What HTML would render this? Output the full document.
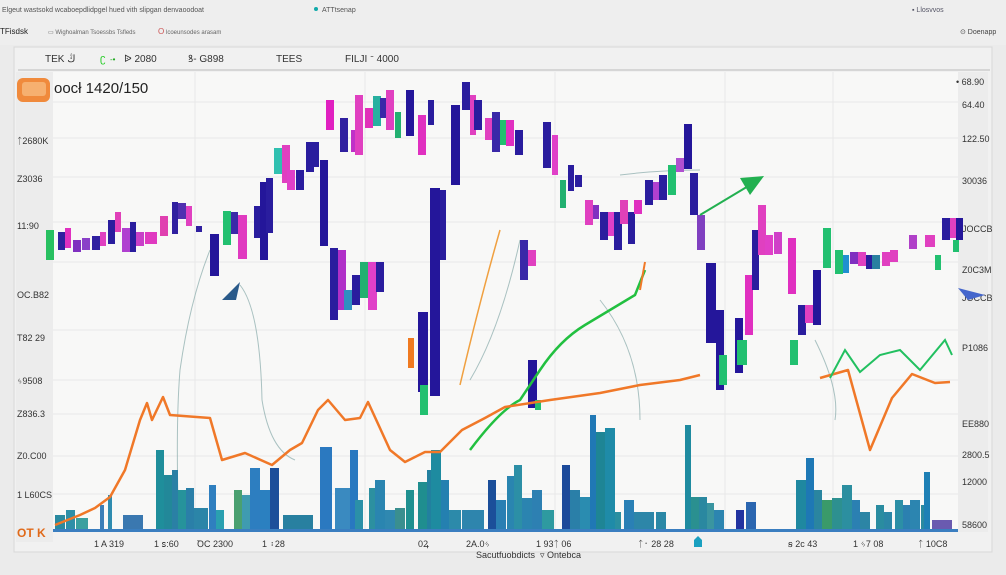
<!DOCTYPE html>
<html><head><meta charset="utf-8"><style>
html,body{margin:0;padding:0;width:1006px;height:575px;overflow:hidden;background:#ececec;font-family:"Liberation Sans",sans-serif}
</style></head><body>
<svg width="1006" height="575" viewBox="0 0 1006 575" xmlns="http://www.w3.org/2000/svg" font-family="Liberation Sans, sans-serif">
<rect width="1006" height="575" fill="#ebebeb"/>
<rect x="0" y="0" width="1006" height="45" fill="#eeeeee"/>
<text x="2" y="12" font-size="7" fill="#555">Elgeut wastsokd wcaboepdlidpgel hued vith slipgan denvaoodoat</text>
<circle cx="316" cy="9" r="2" fill="#1aa"/><text x="322" y="12" font-size="7" fill="#555">ATTtsenap</text>
<text x="912" y="12" font-size="7" fill="#556">▪ Llosvvos</text>
<text x="0" y="34" font-size="8" fill="#222">TFisdsk</text>
<text x="48" y="34" font-size="6" fill="#666">▭ Wighoalman   Tsoessbs Tsfleds</text>
<text x="158" y="34" font-size="8" fill="#c55">O</text><text x="166" y="34" font-size="6" fill="#666">lcoeunsodes  arasam</text>
<text x="960" y="34" font-size="7" fill="#444">⊙ Doenapp</text>
<!-- panel -->
<rect x="14" y="47" width="978" height="505" fill="#f1f1f1" stroke="#d8d8d8"/>
<line x1="18" y1="70" x2="990" y2="70" stroke="#bbb"/>
<text x="45" y="62" font-size="10" fill="#333">TEK ڭ</text>
<text x="100" y="62" font-size="11" fill="#2c2">ʗ</text><text x="110" y="62" font-size="8" fill="#2a2">-•</text>
<text x="124" y="62" font-size="10" fill="#333">ᐉ 2080</text>
<text x="188" y="62" font-size="10" fill="#333">ꝸ-  G898</text>
<text x="276" y="62" font-size="10" fill="#333">TEES</text>
<text x="345" y="62" font-size="10" fill="#333">FILJI ᐨ 4000</text>
<!-- axes columns -->
<rect x="16" y="72" width="37" height="470" fill="#ececec"/>
<rect x="958" y="72" width="30" height="460" fill="#ececec"/>
<rect x="53" y="72" width="905" height="458" fill="#f8f8f7"/>
<g stroke="#e8e8e8" stroke-width="1">
<line x1="53" y1="102" x2="958" y2="102"/><line x1="53" y1="138" x2="958" y2="138"/><line x1="53" y1="177" x2="958" y2="177"/><line x1="53" y1="222" x2="958" y2="222"/><line x1="53" y1="262" x2="958" y2="262"/><line x1="53" y1="330" x2="958" y2="330"/><line x1="53" y1="380" x2="958" y2="380"/><line x1="53" y1="414" x2="958" y2="414"/><line x1="53" y1="456" x2="958" y2="456"/><line x1="53" y1="494" x2="958" y2="494"/>
<line x1="195" y1="72" x2="195" y2="530"/><line x1="365" y1="72" x2="365" y2="530"/><line x1="555" y1="72" x2="555" y2="530"/><line x1="725" y1="72" x2="725" y2="530"/><line x1="833" y1="72" x2="833" y2="530"/>
</g>
<!-- logo -->
<rect x="17" y="78" width="33" height="24" rx="6" fill="#f08a3c"/><rect x="22" y="82" width="24" height="14" rx="3" fill="#f6b070"/>
<text x="54" y="93" font-size="15" fill="#222">oocł 1420/150</text>
<!-- left axis labels -->
<g font-size="9" fill="#333">
<text x="17" y="144">ᛏ2680K</text><text x="17" y="182">Z3036</text><text x="17" y="229">11:90</text><text x="17" y="298">OC.B82</text><text x="17" y="341">T82 29</text><text x="17" y="384">ᛃ9508</text><text x="17" y="417">Z836.3</text><text x="17" y="459">Z0.C00</text><text x="17" y="498">1 L60CS</text>
</g>
<text x="17" y="537" font-size="12" font-weight="bold" fill="#e06a1a">OT K</text>
<!-- right axis labels -->
<g font-size="9" fill="#333">
<text x="956" y="85">• 68.90</text><text x="962" y="108">64.40</text><text x="962" y="142">122.50</text><text x="962" y="184">30036</text><text x="962" y="232">JOCCB</text><text x="962" y="273">Z0C3M</text><text x="962" y="301">JOCCB</text><text x="962" y="351">P1086</text><text x="962" y="427">EE880</text><text x="962" y="458">2800.5</text><text x="962" y="485">12000</text><text x="962" y="528">58600</text>
</g>
<path d="M958 288 L985 295 L968 300 Z" fill="#4466cc"/>
<!-- thin lines -->
<g fill="none" stroke="#8aa" stroke-width="1" opacity=".7">
<path d="M210 250 Q190 300 180 370 Q176 420 178 500"/><path d="M240 285 Q260 310 262 400 Q270 450 295 460"/><path d="M600 300 Q640 350 640 420"/><path d="M815 340 Q840 390 835 420"/><path d="M620 175 Q660 170 700 170"/><path d="M520 240 Q500 330 470 380"/>
</g>
<!-- volume bars -->
<g>
<rect x="55" y="515" width="10" height="15" fill="#2a8aa0"/><rect x="66" y="510" width="9" height="20" fill="#2e8fa8"/><rect x="76" y="518" width="12" height="12" fill="#3aa0a0"/><rect x="100" y="505" width="4" height="25" fill="#3b7fb8"/><rect x="108" y="495" width="4" height="35" fill="#2f8cb0"/><rect x="123" y="515" width="20" height="15" fill="#3a78b0"/>
<rect x="156" y="450" width="8" height="80" fill="#1f8e9b"/><rect x="164" y="475" width="8" height="55" fill="#228899"/><rect x="172" y="470" width="6" height="60" fill="#2a80a5"/><rect x="178" y="490" width="8" height="40" fill="#26939b"/><rect x="186" y="488" width="8" height="42" fill="#2a7fa8"/><rect x="194" y="508" width="14" height="22" fill="#2b85a8"/><rect x="209" y="485" width="7" height="45" fill="#2f7fbf"/><rect x="216" y="510" width="8" height="20" fill="#2aa0b0"/><rect x="234" y="490" width="8" height="40" fill="#4aa070"/><rect x="242" y="495" width="10" height="35" fill="#3f9bb0"/><rect x="250" y="468" width="10" height="62" fill="#2d7ec0"/><rect x="260" y="490" width="10" height="40" fill="#2b80c0"/><rect x="270" y="468" width="9" height="62" fill="#1d4f9a"/>
<rect x="283" y="515" width="30" height="15" fill="#2880a0"/><rect x="320" y="447" width="12" height="83" fill="#2b79c0"/><rect x="335" y="488" width="16" height="42" fill="#3a8ac0"/><rect x="350" y="450" width="8" height="80" fill="#2878c0"/><rect x="355" y="500" width="8" height="30" fill="#2b90a8"/><rect x="369" y="488" width="6" height="42" fill="#2c90a0"/><rect x="375" y="480" width="10" height="50" fill="#2a85b0"/><rect x="385" y="510" width="10" height="20" fill="#2f88b0"/><rect x="395" y="508" width="10" height="22" fill="#3a8f8f"/><rect x="406" y="490" width="8" height="40" fill="#1f9090"/>
<rect x="418" y="482" width="9" height="48" fill="#1f8e8f"/><rect x="427" y="470" width="8" height="60" fill="#22809f"/><rect x="431" y="450" width="10" height="80" fill="#1e8ba0"/><rect x="441" y="480" width="8" height="50" fill="#2480b0"/><rect x="449" y="510" width="12" height="20" fill="#2c8aaa"/><rect x="462" y="510" width="22" height="20" fill="#2e85ad"/><rect x="488" y="480" width="8" height="50" fill="#1b4f9a"/><rect x="496" y="500" width="10" height="30" fill="#2a7fb3"/><rect x="507" y="476" width="7" height="54" fill="#2a85b0"/><rect x="514" y="465" width="8" height="65" fill="#2c8fa6"/><rect x="522" y="498" width="10" height="32" fill="#2b84b0"/><rect x="532" y="490" width="10" height="40" fill="#2d80b2"/><rect x="542" y="510" width="12" height="20" fill="#2e9aa0"/>
<rect x="562" y="465" width="8" height="65" fill="#1d4a9a"/><rect x="570" y="490" width="10" height="40" fill="#2a7fa8"/><rect x="580" y="497" width="10" height="33" fill="#2a8cb0"/><rect x="590" y="415" width="6" height="115" fill="#2078b5"/><rect x="596" y="432" width="10" height="98" fill="#1e8595"/><rect x="605" y="428" width="10" height="102" fill="#1f8ba8"/><rect x="615" y="512" width="6" height="18" fill="#2a8fa0"/><rect x="624" y="500" width="10" height="30" fill="#2a80b5"/><rect x="634" y="512" width="20" height="18" fill="#2d86a8"/><rect x="656" y="512" width="10" height="18" fill="#2b88a6"/>
<rect x="685" y="425" width="6" height="105" fill="#1f8ba0"/><rect x="691" y="497" width="8" height="33" fill="#2a9090"/><rect x="699" y="497" width="8" height="33" fill="#2a88a0"/><rect x="707" y="503" width="7" height="27" fill="#3a95a0"/><rect x="714" y="510" width="10" height="20" fill="#2c85b0"/><rect x="736" y="510" width="8" height="20" fill="#2233a0"/><rect x="746" y="502" width="10" height="28" fill="#2b66b0"/>
<rect x="796" y="480" width="10" height="50" fill="#1f88a0"/><rect x="806" y="458" width="8" height="72" fill="#1e78b5"/><rect x="814" y="490" width="8" height="40" fill="#2a85a0"/><rect x="822" y="500" width="10" height="30" fill="#3a9a6a"/><rect x="832" y="498" width="10" height="32" fill="#2d9090"/><rect x="842" y="485" width="10" height="45" fill="#2c8fa0"/><rect x="852" y="500" width="8" height="30" fill="#2b80b2"/><rect x="860" y="512" width="10" height="18" fill="#2c85a5"/><rect x="876" y="505" width="8" height="25" fill="#2a8ca0"/><rect x="884" y="512" width="8" height="18" fill="#2b86a6"/><rect x="895" y="500" width="8" height="30" fill="#2c8fa6"/><rect x="903" y="505" width="8" height="25" fill="#2b80b0"/><rect x="910" y="500" width="10" height="30" fill="#2c85b0"/><rect x="921" y="505" width="6" height="25" fill="#2a8aa0"/><rect x="924" y="472" width="6" height="58" fill="#1e80b5"/><rect x="932" y="520" width="20" height="10" fill="#6a5ab0"/>
</g>
<!-- candles -->
<g>
<rect x="46" y="230" width="8" height="30" fill="#28c060"/>
<rect x="58" y="232" width="7" height="18" fill="#3020a0"/><rect x="65" y="228" width="6" height="20" fill="#e030c0"/><rect x="73" y="240" width="8" height="12" fill="#8030c0"/><rect x="82" y="238" width="8" height="12" fill="#8a40c8"/><rect x="92" y="236" width="8" height="14" fill="#3020a0"/><rect x="100" y="232" width="6" height="14" fill="#e040c0"/><rect x="108" y="220" width="7" height="24" fill="#2a1d9e"/><rect x="115" y="212" width="6" height="20" fill="#e040b8"/><rect x="122" y="228" width="8" height="24" fill="#b040d0"/><rect x="130" y="222" width="6" height="30" fill="#2a1d9e"/><rect x="136" y="232" width="8" height="14" fill="#c840c8"/><rect x="145" y="232" width="12" height="12" fill="#e03ac0"/><rect x="160" y="216" width="8" height="20" fill="#e040b0"/><rect x="172" y="202" width="6" height="32" fill="#3020a0"/><rect x="178" y="203" width="8" height="16" fill="#5030b0"/><rect x="186" y="206" width="6" height="20" fill="#e040c0"/><rect x="196" y="226" width="6" height="6" fill="#3020a0"/><rect x="210" y="234" width="9" height="42" fill="#24169a"/>
<rect x="223" y="211" width="8" height="34" fill="#22c070"/><rect x="231" y="212" width="7" height="22" fill="#3a2aa8"/><rect x="238" y="215" width="9" height="44" fill="#e03ac0"/><rect x="254" y="206" width="6" height="32" fill="#2a1d9e"/><rect x="260" y="182" width="8" height="78" fill="#24169a"/><rect x="266" y="178" width="7" height="55" fill="#2a1d9e"/><rect x="274" y="148" width="8" height="26" fill="#30c0b0"/><rect x="282" y="145" width="8" height="38" fill="#e040c0"/><rect x="287" y="170" width="8" height="20" fill="#e040c8"/><rect x="296" y="170" width="8" height="20" fill="#2a1d9e"/><rect x="306" y="142" width="8" height="30" fill="#2a1d9e"/><rect x="313" y="142" width="6" height="25" fill="#2a1d9e"/><rect x="320" y="160" width="8" height="86" fill="#24169a"/>
<rect x="326" y="100" width="8" height="30" fill="#e020c0"/><rect x="340" y="118" width="8" height="34" fill="#3020a0"/><rect x="351" y="130" width="8" height="22" fill="#c030c8"/><rect x="355" y="95" width="8" height="60" fill="#e040c0"/><rect x="365" y="108" width="8" height="20" fill="#e030b8"/><rect x="373" y="96" width="8" height="30" fill="#28b0a0"/><rect x="380" y="98" width="8" height="20" fill="#3a28a8"/><rect x="386" y="90" width="8" height="40" fill="#e040c0"/><rect x="395" y="112" width="6" height="26" fill="#22b070"/><rect x="406" y="90" width="8" height="46" fill="#24169a"/><rect x="418" y="115" width="8" height="40" fill="#e030c0"/><rect x="428" y="100" width="6" height="25" fill="#2a1d9e"/>
<rect x="330" y="248" width="8" height="72" fill="#2a1d9e"/><rect x="338" y="250" width="8" height="60" fill="#b030c8"/><rect x="344" y="290" width="8" height="20" fill="#3090c0"/><rect x="352" y="275" width="8" height="30" fill="#2a1d9e"/><rect x="360" y="262" width="8" height="36" fill="#22b070"/><rect x="368" y="262" width="9" height="48" fill="#e040c8"/><rect x="376" y="262" width="8" height="30" fill="#2a1d9e"/>
<rect x="408" y="338" width="6" height="30" fill="#f07a20"/><rect x="418" y="312" width="10" height="80" fill="#24169a"/><rect x="420" y="385" width="8" height="30" fill="#22c070"/><rect x="430" y="188" width="10" height="208" fill="#24169a"/><rect x="440" y="190" width="6" height="70" fill="#2a1d9e"/><rect x="451" y="105" width="9" height="80" fill="#24169a"/><rect x="462" y="82" width="8" height="28" fill="#2a1d9e"/><rect x="470" y="95" width="6" height="40" fill="#e040c0"/><rect x="474" y="100" width="8" height="30" fill="#2a1d9e"/><rect x="485" y="118" width="8" height="22" fill="#e040c0"/><rect x="492" y="112" width="8" height="40" fill="#3a28a8"/><rect x="500" y="120" width="8" height="25" fill="#22c070"/><rect x="506" y="120" width="8" height="26" fill="#e030c0"/><rect x="515" y="130" width="8" height="25" fill="#2a1d9e"/><rect x="520" y="240" width="8" height="40" fill="#3a28a8"/><rect x="528" y="250" width="8" height="16" fill="#e040c0"/>
<rect x="528" y="360" width="9" height="48" fill="#24169a"/><rect x="535" y="400" width="6" height="10" fill="#22c070"/>
<rect x="543" y="122" width="8" height="46" fill="#2a1d9e"/><rect x="552" y="135" width="6" height="40" fill="#e040c8"/><rect x="560" y="180" width="6" height="28" fill="#22b070"/><rect x="568" y="165" width="6" height="26" fill="#2a1d9e"/><rect x="575" y="175" width="7" height="12" fill="#2a1d9e"/><rect x="585" y="200" width="8" height="25" fill="#e040c0"/><rect x="593" y="205" width="6" height="14" fill="#8030c0"/><rect x="600" y="212" width="8" height="28" fill="#2a1d9e"/><rect x="608" y="212" width="6" height="24" fill="#e040c8"/><rect x="614" y="212" width="8" height="38" fill="#2a1d9e"/><rect x="620" y="200" width="8" height="24" fill="#e040b8"/><rect x="628" y="212" width="7" height="32" fill="#2a1d9e"/><rect x="634" y="200" width="8" height="14" fill="#e030c0"/><rect x="645" y="180" width="8" height="25" fill="#2a1d9e"/><rect x="653" y="182" width="6" height="18" fill="#b040d0"/><rect x="659" y="175" width="8" height="25" fill="#2a1d9e"/><rect x="668" y="165" width="8" height="30" fill="#22c070"/><rect x="676" y="158" width="8" height="14" fill="#b050d0"/><rect x="684" y="124" width="8" height="45" fill="#24169a"/><rect x="690" y="173" width="8" height="42" fill="#2a1d9e"/><rect x="697" y="215" width="8" height="35" fill="#8040c0"/>
<rect x="706" y="263" width="10" height="80" fill="#24169a"/><rect x="716" y="310" width="8" height="80" fill="#24169a"/><rect x="719" y="355" width="8" height="30" fill="#22c070"/><rect x="735" y="318" width="8" height="55" fill="#24169a"/><rect x="737" y="340" width="10" height="25" fill="#22c070"/><rect x="745" y="275" width="8" height="60" fill="#e030c0"/><rect x="752" y="230" width="7" height="60" fill="#2a1d9e"/><rect x="758" y="205" width="8" height="50" fill="#e040c0"/><rect x="765" y="235" width="8" height="20" fill="#e040c8"/><rect x="774" y="232" width="8" height="22" fill="#d040c8"/><rect x="788" y="238" width="8" height="56" fill="#e030c0"/><rect x="798" y="305" width="8" height="30" fill="#2a1d9e"/><rect x="805" y="305" width="8" height="18" fill="#e040c0"/><rect x="813" y="270" width="8" height="55" fill="#24169a"/><rect x="790" y="340" width="8" height="25" fill="#22c070"/><rect x="823" y="228" width="8" height="40" fill="#22c070"/><rect x="835" y="250" width="8" height="24" fill="#22c070"/><rect x="843" y="255" width="6" height="18" fill="#2090d0"/><rect x="850" y="252" width="8" height="12" fill="#8030c0"/><rect x="858" y="252" width="8" height="14" fill="#e040c0"/><rect x="866" y="255" width="6" height="14" fill="#2a1d9e"/><rect x="872" y="255" width="8" height="14" fill="#2a80a0"/><rect x="882" y="252" width="8" height="14" fill="#e040c0"/><rect x="890" y="250" width="8" height="12" fill="#e040c0"/><rect x="909" y="235" width="8" height="14" fill="#b040c8"/><rect x="925" y="235" width="10" height="12" fill="#e040c0"/><rect x="942" y="218" width="8" height="22" fill="#2a1d9e"/><rect x="950" y="218" width="6" height="20" fill="#e040c0"/><rect x="956" y="218" width="7" height="22" fill="#24169a"/><rect x="953" y="240" width="6" height="12" fill="#22c070"/><rect x="935" y="255" width="6" height="15" fill="#22c070"/>
</g>
<!-- green arrow -->
<path d="M700 215 Q725 200 750 185" stroke="#22b050" stroke-width="2" fill="none"/>
<path d="M740 178 L764 176 L750 195 Z" fill="#22b050"/>
<path d="M222 300 L240 282 L236 300 Z" fill="#2a5a8a"/>
<!-- green line -->
<path d="M470 450 Q500 410 520 400 L540 370 Q560 340 585 325 Q610 310 635 295 L645 270" stroke="#22c040" stroke-width="2.5" fill="none"/>
<path d="M460 385 Q480 300 500 230" stroke="#f0a040" stroke-width="1.5" fill="none"/>
<!-- orange line -->
<path d="M55 525 L80 515 L95 508 L110 497 L125 470 L140 420 L147 403 L152 420 L163 397 L170 415 L210 418 L222 460 L245 453 L272 465 L290 450 L302 443 L318 410 L328 400 L345 420 L360 418 L368 402 L390 450 L405 462 L425 452 L440 452 L462 430 L485 418 L505 407 L550 400 L600 393 L640 385 L680 380 L700 375 M820 378 L848 370 L870 450 L892 398 L912 374 L935 383 L950 382" stroke="#f07828" stroke-width="2.5" fill="none" stroke-linejoin="round"/>
<path d="M830 378 L845 350 L860 372 L880 355 L900 350 L920 370 L945 340 L952 355" stroke="#22c060" stroke-width="2" fill="none"/>
<path d="M640 290 L645 262" stroke="#f07828" stroke-width="2" fill="none"/>
<!-- baseline -->
<rect x="53" y="529" width="905" height="3" fill="#3a7ec0"/>
<!-- bottom labels -->
<g font-size="9" fill="#333">
<text x="94" y="547">1 A 319</text><text x="154" y="547">1 ꜱ:60</text><text x="197" y="547">ꝹC 2300</text><text x="262" y="547">1 ᛬28</text><text x="418" y="547">0Ꝝ</text><text x="466" y="547">2A.0ᛃ</text><text x="536" y="547">1 93ᛏ 06</text><text x="638" y="547">ᛏ᛫ 28 28</text><text x="788" y="547">ꞩ 2c 43</text><text x="853" y="547">1 ᛃ7 08</text><text x="918" y="547">ᛏ 10C8</text>
<text x="476" y="558">Sacutfuobdicts</text><text x="540" y="558">▿ Ontebca</text>
</g>
<path d="M694 540 L698 536 L702 540 L702 547 L694 547 Z" fill="#1aa0c0"/>
</svg>
</body></html>
